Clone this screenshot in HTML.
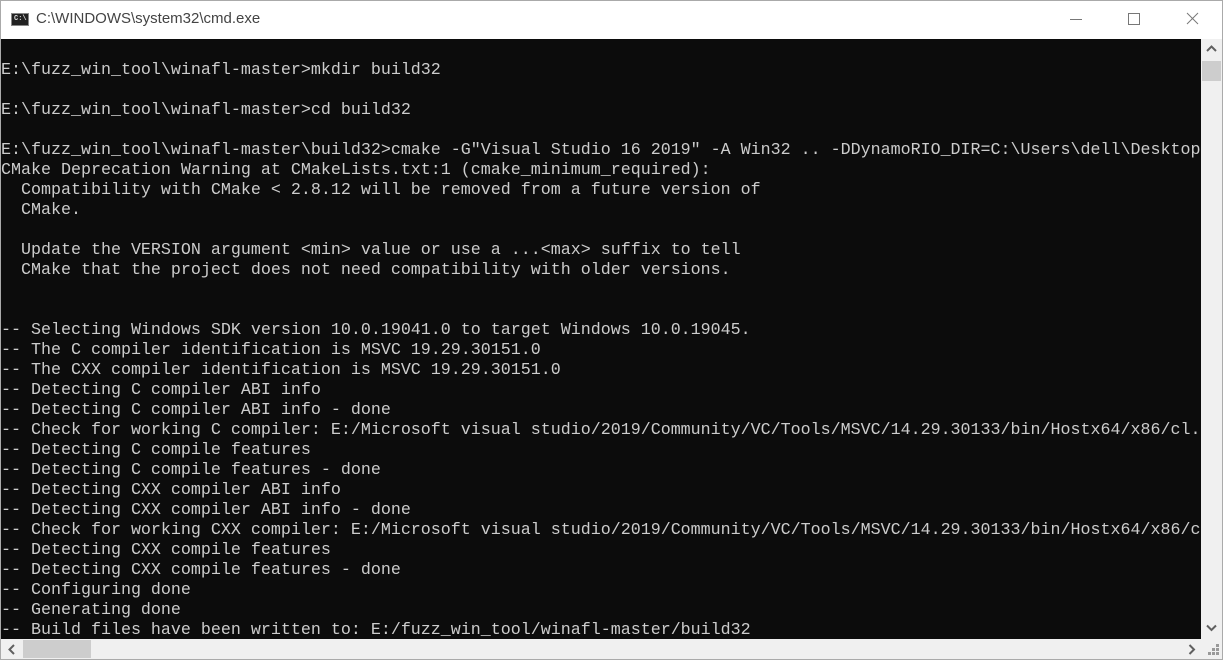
<!DOCTYPE html>
<html><head><style>
body{margin:0;width:1223px;height:660px;overflow:hidden;background:#fff;position:relative;font-family:"Liberation Sans",sans-serif}
.win{position:absolute;left:0;top:0;width:1221px;height:658px;border:1px solid #aaa;background:#fff}
.title{position:absolute;left:35px;top:9px;font-size:15px;color:#444}
.icon{position:absolute;left:10px;top:12px;width:18px;height:13px;background:#222;border:1px solid #888;box-sizing:border-box}
.icon span{position:absolute;left:2px;top:2px;font:bold 7px "Liberation Mono",monospace;color:#ddd;line-height:7px}
.con{position:absolute;left:0;top:38px;width:1200px;height:600px;background:#0c0c0c;overflow:hidden}
pre{margin:0;padding:2px 0 0 0;font-family:"Liberation Mono",monospace;font-size:16.67px;line-height:20px;color:#cccccc;white-space:pre}
.vs{position:absolute;left:1200px;top:38px;width:21px;height:600px;background:#f0f0f0}
.hs{position:absolute;left:0;top:638px;width:1221px;height:20px;background:#f0f0f0}
.thumb{position:absolute;background:#cdcdcd}
</style></head><body>
<div class="win">
<div class="icon"><span>C:\</span></div>
<div class="title">C:\WINDOWS\system32\cmd.exe</div>
<svg style="position:absolute;left:1060px;top:8px" width="140" height="22"><line x1="9" y1="10.5" x2="21" y2="10.5" stroke="#777"/><rect x="67.5" y="4.5" width="11" height="11" fill="none" stroke="#777"/><line x1="126" y1="4" x2="137" y2="15" stroke="#777"/><line x1="137" y1="4" x2="126" y2="15" stroke="#777"/></svg>
<div class="con"><pre>&nbsp;
E:\fuzz_win_tool\winafl-master>mkdir build32

E:\fuzz_win_tool\winafl-master>cd build32

E:\fuzz_win_tool\winafl-master\build32>cmake -G"Visual Studio 16 2019" -A Win32 .. -DDynamoRIO_DIR=C:\Users\dell\Desktop
CMake Deprecation Warning at CMakeLists.txt:1 (cmake_minimum_required):
  Compatibility with CMake < 2.8.12 will be removed from a future version of
  CMake.

  Update the VERSION argument &lt;min&gt; value or use a ...&lt;max&gt; suffix to tell
  CMake that the project does not need compatibility with older versions.


-- Selecting Windows SDK version 10.0.19041.0 to target Windows 10.0.19045.
-- The C compiler identification is MSVC 19.29.30151.0
-- The CXX compiler identification is MSVC 19.29.30151.0
-- Detecting C compiler ABI info
-- Detecting C compiler ABI info - done
-- Check for working C compiler: E:/Microsoft visual studio/2019/Community/VC/Tools/MSVC/14.29.30133/bin/Hostx64/x86/cl.exe
-- Detecting C compile features
-- Detecting C compile features - done
-- Detecting CXX compiler ABI info
-- Detecting CXX compiler ABI info - done
-- Check for working CXX compiler: E:/Microsoft visual studio/2019/Community/VC/Tools/MSVC/14.29.30133/bin/Hostx64/x86/cl.exe
-- Detecting CXX compile features
-- Detecting CXX compile features - done
-- Configuring done
-- Generating done
-- Build files have been written to: E:/fuzz_win_tool/winafl-master/build32</pre></div>
<div class="vs"><div class="thumb" style="left:1px;top:22px;width:19px;height:20px"></div>
<svg style="position:absolute;left:5px;top:6px" width="12" height="8"><polyline points="1,6 5.5,1.5 10,6" fill="none" stroke="#606060" stroke-width="2"/></svg>
<svg style="position:absolute;left:5px;top:585px" width="12" height="8"><polyline points="1,1.5 5.5,6 10,1.5" fill="none" stroke="#606060" stroke-width="2"/></svg>
</div>
<div class="hs"><div class="thumb" style="left:22px;top:1px;width:68px;height:18px"></div>
<svg style="position:absolute;left:7px;top:5px" width="8" height="12"><polyline points="6,1 1.5,5.5 6,10" fill="none" stroke="#606060" stroke-width="2"/></svg>
<svg style="position:absolute;left:1187px;top:5px" width="8" height="12"><polyline points="1.5,1 6,5.5 1.5,10" fill="none" stroke="#606060" stroke-width="2"/></svg>
<svg style="position:absolute;left:1207px;top:5px" width="12" height="12"><g fill="#999"><rect x="8" y="0" width="3" height="3"/><rect x="4" y="4" width="3" height="3"/><rect x="8" y="4" width="3" height="3"/><rect x="0" y="8" width="3" height="3"/><rect x="4" y="8" width="3" height="3"/><rect x="8" y="8" width="3" height="3"/></g></svg>
</div>
</div>
</body></html>
